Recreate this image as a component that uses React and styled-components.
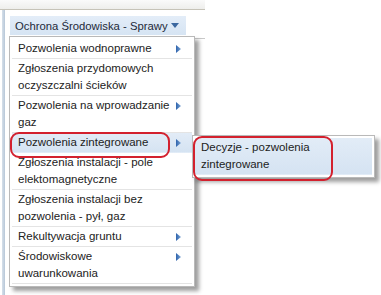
import React from "react";
import styled, { createGlobalStyle } from "styled-components";

const Global = createGlobalStyle`
  html, body { margin: 0; padding: 0; background: #ffffff; }
  body { font-family: "Liberation Sans", Arial, sans-serif; }
`;

const Page = styled.div`
  position: relative;
  width: 381px;
  height: 295px;
  overflow: hidden;
  background: #ffffff;
  color: #222222;
  font-size: 11px;
`;

const TopStrip = styled.div`
  width: 205px;
  height: 9px;
  background: linear-gradient(#fafafa, #eeeeec);
  border-bottom: 1px solid #c6c3b8;
`;

const Body = styled.div`
  display: flex;
  height: 285px;
`;

const LeftRail = styled.div`
  margin-left: 2px;
  width: 3px;
  background: linear-gradient(90deg, #d6e0ea, #b7c7d8);
`;

const Content = styled.div`
  padding: 6px 0 0 5px;
  display: flex;
  flex-direction: column;
  align-items: flex-start;
`;

const ToolbarButton = styled.div`
  display: flex;
  align-items: center;
  gap: 3px;
  height: 19px;
  padding: 0 7px 0 5px;
  background: linear-gradient(#e3edf8, #d6e4f3);
  font-size: 11.3px;
  color: #1e2a3a;
`;

const PanelLine = styled.div`
  margin-top: 3px;
  width: 195px;
  border-top: 1px solid #c9c9c9;
`;

const Menu = styled.div`
  position: absolute;
  left: ${(p) => p.$left}px;
  top: ${(p) => p.$top}px;
  width: ${(p) => p.$width}px;
  box-sizing: border-box;
  background: #ffffff;
  border: 1px solid #b9b9b9;
  padding: 2px;
  box-shadow: 4px 4px 4px rgba(0, 0, 0, 0.38);
`;

const Item = styled.div`
  display: flex;
  align-items: flex-start;
  padding: 1px 0 1px 6px;
  line-height: 17px;
  font-size: 11.5px;
  background: ${(p) =>
    p.$active ? "linear-gradient(#e2ecf7, #d5e3f2)" : "transparent"};
  border-bottom: 1px solid ${(p) => (p.$noSep ? "transparent" : "#e4e4e4")};
`;

const Label = styled.div`
  flex: 1;
  white-space: nowrap;
`;

const ArrowBox = styled.div`
  width: 16px;
  height: 17px;
  display: flex;
  align-items: center;
  justify-content: flex-start;
`;

const Highlight = styled.div`
  position: absolute;
  left: ${(p) => p.$left}px;
  top: ${(p) => p.$top}px;
  width: ${(p) => p.$width}px;
  height: ${(p) => p.$height}px;
  border: 2px solid #d3212e;
  border-radius: 9px;
  pointer-events: none;
`;

const RightArrow = () => (
  <svg width="5" height="8" viewBox="0 0 5 8">
    <defs>
      <linearGradient id="ra" x1="0" y1="0" x2="1" y2="0">
        <stop offset="0" stopColor="#2f64ad" />
        <stop offset="1" stopColor="#7aa3d3" />
      </linearGradient>
    </defs>
    <polygon points="0,0 5,4 0,8" fill="url(#ra)" />
  </svg>
);

const DownArrow = () => (
  <svg width="8" height="5" viewBox="0 0 8 5">
    <polygon points="0,0 8,0 4,5" fill="#3b679f" />
  </svg>
);

const items = [
  { lines: ["Pozwolenia wodnoprawne"], arrow: true },
  { lines: ["Zgłoszenia przydomowych", "oczyszczalni ścieków"] },
  { lines: ["Pozwolenia na wprowadzanie", "gaz"], arrow: true },
  { lines: ["Pozwolenia zintegrowane"], arrow: true, active: true },
  { lines: ["Zgłoszenia instalacji - pole", "elektomagnetyczne"] },
  { lines: ["Zgłoszenia instalacji bez", "pozwolenia - pył, gaz"] },
  { lines: ["Rekultywacja gruntu"], arrow: true },
  { lines: ["Środowiskowe", "uwarunkowania"], arrow: true },
];

export default function App() {
  return (
    <Page>
      <Global />
      <TopStrip />
      <Body>
        <LeftRail />
        <Content>
          <ToolbarButton>
            <span>Ochrona Środowiska - Sprawy</span>
            <DownArrow />
          </ToolbarButton>
          <PanelLine />
        </Content>
      </Body>

      <Menu $left={9} $top={36} $width={186}>
        {items.map((it, i) => (
          <Item key={i} $active={it.active} $noSep={it.active}>
            <Label>
              {it.lines.map((l, j) => (
                <div key={j}>{l}</div>
              ))}
            </Label>
            <ArrowBox>{it.arrow && <RightArrow />}</ArrowBox>
          </Item>
        ))}
      </Menu>

      <Menu $left={192} $top={135} $width={183}>
        <Item $active $noSep>
          <Label>
            <div>Decyzje - pozwolenia</div>
            <div>zintegrowane</div>
          </Label>
        </Item>
      </Menu>

      <Highlight $left={10} $top={132} $width={156} $height={22} />
      <Highlight $left={193} $top={136} $width={136} $height={41} />
    </Page>
  );
}
